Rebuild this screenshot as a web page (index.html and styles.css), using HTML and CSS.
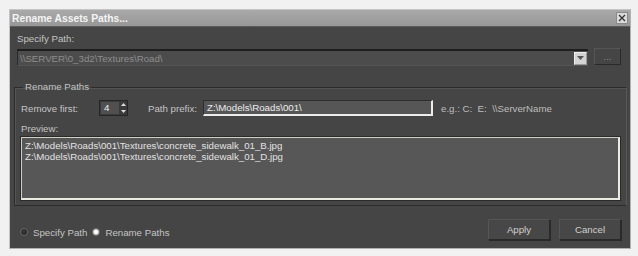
FILE: index.html
```html
<!DOCTYPE html>
<html lang="en">
<head>
    <meta charset="UTF-8">
    <title>Rename Assets Paths...</title>
    <link rel="stylesheet" href="styles.css">
</head>
<body>
    <div class="dialog">
        <div class="titlebar">
            <span class="title">Rename Assets Paths...</span>
            <span class="close">
                <svg width="8" height="8" viewBox="0 0 8 8"><path d="M1 1L7 7M7 1L1 7" stroke="#333" stroke-width="1.3"/></svg>
            </span>
        </div>

        <div class="body">
            <div class="label-row">Specify Path:</div>
            <div class="path-row">
                <div class="combo">
                    <span class="combo-text">\\SERVER\0_3d2\Textures\Road\</span>
                    <span class="combo-arrow">
                        <svg width="7" height="4" viewBox="0 0 7 4"><path d="M0 0H7L3.5 4Z" fill="#555"/></svg>
                    </span>
                </div>
                <button class="browse">...</button>
            </div>

            <fieldset class="group">
                <legend>Rename Paths</legend>
                <div class="prefix-row">
                    <span class="remove-label">Remove first:</span>
                    <div class="spinner">
                        <span class="spin-value">4</span>
                        <span class="spin-arrows">
                            <svg width="7" height="12" viewBox="0 0 7 12"><path d="M3.5 1L6 4H1Z M3.5 11L6 8H1Z" fill="#ddd"/></svg>
                        </span>
                    </div>
                    <span class="prefix-label">Path prefix:</span>
                    <div class="prefix-input">Z:\Models\Roads\001\</div>
                    <span class="hint">e.g.: C:&nbsp; E:&nbsp; \\ServerName</span>
                </div>
                <div class="preview-label">Preview:</div>
                <div class="preview">
                    <div>Z:\Models\Roads\001\Textures\concrete_sidewalk_01_B.jpg</div>
                    <div>Z:\Models\Roads\001\Textures\concrete_sidewalk_01_D.jpg</div>
                </div>
            </fieldset>

            <div class="footer">
                <div class="radios">
                    <span class="radio"></span><span class="radio-label">Specify Path</span>
                    <span class="radio checked"></span><span class="radio-label">Rename Paths</span>
                </div>
                <div class="buttons">
                    <button class="btn">Apply</button>
                    <button class="btn">Cancel</button>
                </div>
            </div>
        </div>
    </div>
</body>
</html>
```

FILE: styles.css
```css
body {
    margin: 0;
    padding: 9px 0 0 9px;
    background-color: #f1f1f1;
    font-family: "Liberation Sans", Arial, sans-serif;
    font-size: 9.7px;
    color: #c4c4c4;
}
.dialog {
    width: 620px;
    border: 1px solid #c4c4c4;
    border-right-color: #b0b0b0;
    border-bottom-color: #b0b0b0;
    background-color: #454545;
}
.titlebar {
    height: 16px;
    display: flex;
    align-items: center;
    justify-content: space-between;
    padding: 0 2px 0 2px;
    background: linear-gradient(#a9a9a9, #979797);
    border-bottom: 1px solid #5a5a5a;
}
.title {
    font-weight: bold;
    font-size: 10.3px;
    color: #f4f4f4;
}
.close {
    width: 10px;
    height: 10px;
    display: flex;
    align-items: center;
    justify-content: center;
    background-color: #dadada;
    border: 1px solid #8a8a8a;
}
.body {
    padding: 6px 3px 8px 4px;
}
.label-row {
    line-height: 12px;
    padding-left: 3px;
}
.path-row {
    display: flex;
    gap: 6px;
    margin-top: 4px;
    padding-left: 3px;
}
.combo {
    width: 571px;
    height: 17px;
    box-sizing: border-box;
    display: flex;
    align-items: center;
    justify-content: space-between;
    background-color: #4c4c4c;
    border-top: 2px solid #1e1e1e;
    border-left: 1px solid #2a2a2a;
    border-bottom: 1px solid #555;
}
.combo-text {
    padding-left: 2px;
    color: #8c8c8c;
}
.combo-arrow {
    width: 13px;
    height: 13px;
    margin-right: 1px;
    display: flex;
    align-items: center;
    justify-content: center;
    background-color: #d4d4d4;
    border: 1px solid #eee;
    border-right-color: #999;
    border-bottom-color: #999;
    box-sizing: border-box;
}
.browse {
    width: 27px;
    height: 17px;
    padding: 0;
    margin-top: -1px;
    font-family: inherit;
    font-size: 9.7px;
    color: #8a8a8a;
    background-color: #454545;
    border: 1px solid #2a2a2a;
    border-top-color: #555;
    border-left-color: #555;
    line-height: 10px;
}
.group {
    margin: 15px 0 0 0;
    padding: 0 6px 5px 6px;
    border: 1px solid #2c2c2c;
    border-right-color: #575757;
    border-bottom-color: #2c2c2c;
    box-shadow: inset 1px 1px 0 #555;
}
.group legend {
    padding: 0 2px;
    margin-left: 2px;
    line-height: 12px;
}
.prefix-row {
    display: flex;
    align-items: center;
    margin-top: 7px;
    height: 16px;
}
.remove-label {
    width: 78px;
}
.spinner {
    width: 29px;
    height: 16px;
    box-sizing: border-box;
    display: flex;
    align-items: center;
    border: 1px solid #262626;
    background-color: #3a3a3a;
}
.spin-value {
    width: 18px;
    height: 12px;
    margin-left: 1px;
    background-color: #505050;
    color: #f0f0f0;
    line-height: 12px;
    padding-left: 3px;
    box-sizing: border-box;
}
.spin-arrows {
    display: flex;
    margin-left: 1px;
}
.prefix-label {
    margin-left: 20px;
    width: 55px;
}
.prefix-input {
    width: 230px;
    height: 16px;
    box-sizing: border-box;
    padding-left: 3px;
    line-height: 13px;
    background-color: #565656;
    color: #ececec;
    border-top: 1px solid #2e2e2e;
    border-left: 1px solid #2e2e2e;
    border-right: 2px solid #ececec;
    border-bottom: 2px solid #ececec;
}
.hint {
    margin-left: 8px;
    color: #bdbdbd;
}
.preview-label {
    margin-top: 7px;
    line-height: 12px;
}
.preview {
    height: 63px;
    margin-top: 2px;
    box-sizing: border-box;
    padding: 2px 3px;
    background-color: #575757;
    color: #e2e2e2;
    line-height: 11px;
    border: 1px solid #cfcfc8;
    border-right: 2px solid #ecebe2;
    border-bottom: 2px solid #ecebe2;
    box-shadow: 0 0 0 1px #2a2a2a;
}
.footer {
    display: flex;
    align-items: center;
    justify-content: space-between;
    margin-top: 13px;
    padding: 0 6px 0 6px;
}
.radios {
    display: flex;
    align-items: center;
    margin-top: 5px;
}
.radio {
    width: 8px;
    height: 8px;
    border-radius: 50%;
    background: radial-gradient(circle at 40% 40%, #3a3a3a, #1c1c1c);
    border: 1px solid #666;
    box-sizing: border-box;
}
.radio.checked {
    background: radial-gradient(circle, #ffffff 35%, #bbbbbb 70%);
    border-color: #777;
    margin-left: 5px;
}
.radio-label {
    margin-left: 5px;
}
.buttons {
    display: flex;
    gap: 9px;
}
.btn {
    width: 62px;
    height: 21px;
    padding: 0;
    font-family: inherit;
    font-size: 9.7px;
    color: #d0d0d0;
    background-color: #474747;
    border: 1px solid #2a2a2a;
    border-top-color: #555;
    border-left-color: #555;
    box-shadow: 1px 1px 0 #2a2a2a;
}
```
